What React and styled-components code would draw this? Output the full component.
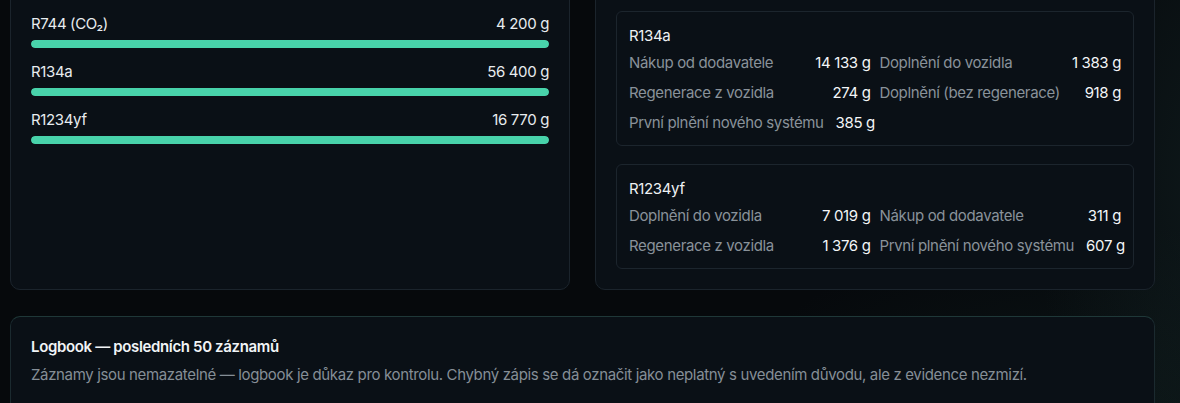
import React from "react";
import styled, { createGlobalStyle } from "styled-components";

const Global = createGlobalStyle`
  html, body { margin: 0; padding: 0; }
  body {
    background: #06090c;
    font-family: Inter, "Noto Sans", sans-serif;
    color: #e6eaee;
    overflow: hidden;
  }
`;

const Page = styled.div`
  width: 1180px;
  height: 403px;
  box-sizing: border-box;
  padding: 0 25px 0 10px;
  overflow: hidden;
  letter-spacing: -0.35px;
  background:
    radial-gradient(ellipse 260px 520px at 1230px 180px, rgba(30, 55, 55, 0.35), transparent 75%),
    radial-gradient(ellipse 500px 260px at 1100px 420px, rgba(30, 60, 55, 0.22), transparent 75%),
    #06090c;
`;

const TopGrid = styled.div`
  display: grid;
  grid-template-columns: minmax(0, 1fr) minmax(0, 1fr);
  gap: 25px;
  margin-top: -10px;
`;

const Panel = styled.section`
  background: #0a1016;
  border: 1px solid #1b242c;
  border-radius: 10px;
  padding: ${(p) => p.$pad || "20px"};
  box-sizing: border-box;
`;

const BarList = styled.div`
  display: flex;
  flex-direction: column;
  gap: 14px;
`;

const BarRow = styled.div`
  display: flex;
  flex-direction: column;
  gap: 6px;
`;

const BarHead = styled.div`
  display: flex;
  justify-content: space-between;
  font-size: 15px;
  line-height: 20px;
  color: #e8ecef;
`;

const Track = styled.div`
  height: 8px;
  border-radius: 4px;
  background: #1a242b;
  overflow: hidden;
`;

const Fill = styled.div`
  height: 100%;
  border-radius: 4px;
  background: #48d3aa;
`;

const CardStack = styled.div`
  display: flex;
  flex-direction: column;
  gap: 18px;
`;

const Card = styled.div`
  border: 1px solid #1c252d;
  border-radius: 6px;
  background: #0a1016;
  padding: 14px 12px 8px 12px;
`;

const CardTitle = styled.div`
  font-size: 15px;
  line-height: 20px;
  color: #eef1f3;
  font-weight: 400;
  margin-bottom: 1px;
`;

const StatGrid = styled.div`
  display: grid;
  grid-template-columns: minmax(0, 1fr) minmax(0, 1fr);
  column-gap: 9px;
`;

const Stat = styled.div`
  display: flex;
  justify-content: space-between;
  align-items: center;
  gap: 12px;
  height: 30px;
  font-size: 15px;
`;

const StatLabel = styled.span`
  color: #89929a;
  white-space: nowrap;
`;

const StatValue = styled.span`
  color: #f4f6f8;
  font-weight: 400;
  white-space: nowrap;
`;

const Logbook = styled.section`
  margin-top: 26px;
  background: #0a1016;
  border: 1px solid #1b2a2f;
  border-top-color: #1f3838;
  border-radius: 10px;
  padding: 20px 20px 40px;
`;

const LogTitle = styled.h2`
  margin: 0;
  font-size: 15px;
  line-height: 20px;
  font-weight: 600;
  color: #f1f4f6;
`;

const LogDesc = styled.p`
  margin: 8px 0 0;
  font-size: 15px;
  line-height: 20px;
  color: #858e96;
`;

const bars = [
  { name: "R744 (CO₂)", value: "4 200 g", pct: 100 },
  { name: "R134a", value: "56 400 g", pct: 100 },
  { name: "R1234yf", value: "16 770 g", pct: 100 },
];

const cards = [
  {
    title: "R134a",
    stats: [
      ["Nákup od dodavatele", "14 133 g"],
      ["Doplnění do vozidla", "1 383 g"],
      ["Regenerace z vozidla", "274 g"],
      ["Doplnění (bez regenerace)", "918 g"],
      ["První plnění nového systému", "385 g"],
    ],
  },
  {
    title: "R1234yf",
    stats: [
      ["Doplnění do vozidla", "7 019 g"],
      ["Nákup od dodavatele", "311 g"],
      ["Regenerace z vozidla", "1 376 g"],
      ["První plnění nového systému", "607 g"],
    ],
  },
];

export default function App() {
  return (
    <>
      <Global />
      <Page>
        <TopGrid>
          <Panel $pad="23px 20px 20px 20px">
            <BarList>
              {bars.map((b) => (
                <BarRow key={b.name}>
                  <BarHead>
                    <span>{b.name}</span>
                    <span>{b.value}</span>
                  </BarHead>
                  <Track>
                    <Fill style={{ width: `${b.pct}%` }} />
                  </Track>
                </BarRow>
              ))}
            </BarList>
          </Panel>
          <Panel $pad="20px">
            <CardStack>
              {cards.map((c) => (
                <Card key={c.title}>
                  <CardTitle>{c.title}</CardTitle>
                  <StatGrid>
                    {c.stats.map(([l, v]) => (
                      <Stat key={l}>
                        <StatLabel>{l}</StatLabel>
                        <StatValue>{v}</StatValue>
                      </Stat>
                    ))}
                  </StatGrid>
                </Card>
              ))}
            </CardStack>
          </Panel>
        </TopGrid>
        <Logbook>
          <LogTitle>Logbook — posledních 50 záznamů</LogTitle>
          <LogDesc>
            Záznamy jsou nemazatelné — logbook je důkaz pro kontrolu. Chybný zápis se dá označit jako neplatný s
            uvedením důvodu, ale z evidence nezmizí.
          </LogDesc>
        </Logbook>
      </Page>
    </>
  );
}
